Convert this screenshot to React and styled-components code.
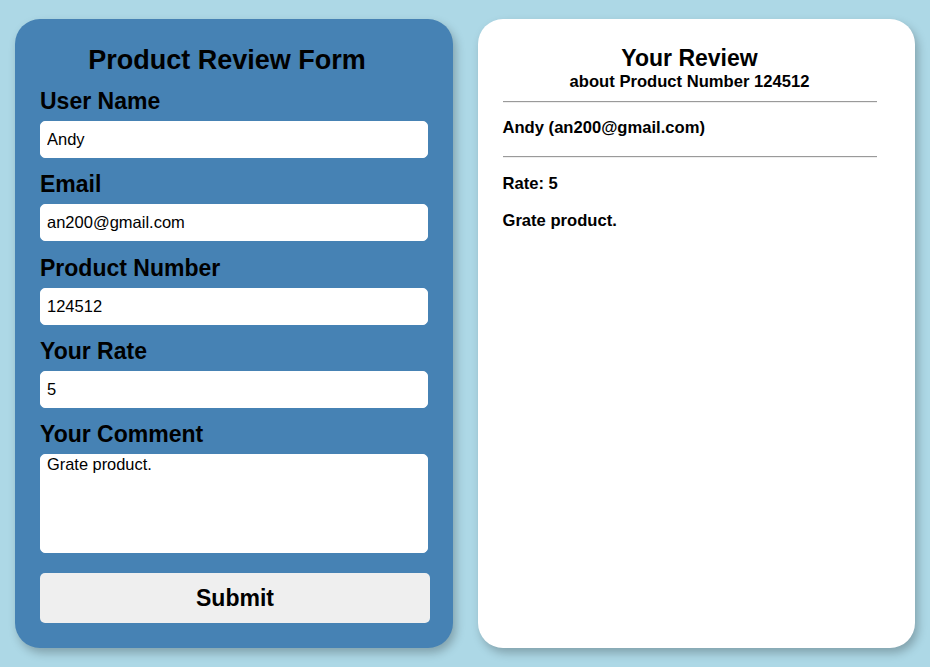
import React, { useState } from "react";
import styled, { createGlobalStyle } from "styled-components";

const GlobalStyle = createGlobalStyle`
  html, body {
    margin: 0;
    padding: 0;
    background-color: #add8e6;
    font-family: "Liberation Sans", Arial, sans-serif;
    color: #000;
  }
`;

const Page = styled.main`
  display: flex;
  align-items: stretch;
  gap: 25px;
  padding: 19px 15px;
  min-height: 667px;
  box-sizing: border-box;
`;

const Card = styled.section`
  flex: 1;
  min-width: 0;
  align-self: flex-start;
  height: 629px;
  box-sizing: border-box;
  padding: 26px 38.5px 25px 25px;
  border-radius: 25px;
  background-color: ${(p) => (p.$dark ? "#4682b4" : "#fff")};
  box-shadow: 3px 5px 10px rgba(0, 0, 0, 0.25);
`;

const FormTitle = styled.h1`
  margin: 0 0 12px;
  font-size: 27px;
  line-height: 31px;
  font-weight: bold;
  text-align: center;
`;

const Form = styled.form`
  display: flex;
  flex-direction: column;
`;

const Field = styled.div`
  display: flex;
  flex-direction: column;
  gap: 7px;
  margin-bottom: 13.3px;
`;

const Label = styled.label`
  font-size: 23px;
  line-height: 26px;
  font-weight: bold;
`;

const Input = styled.input`
  box-sizing: content-box;
  width: 100%;
  height: 23px;
  padding: 6px;
  border: 1px solid #fff;
  border-radius: 5px;
  background: #fff;
  font-family: inherit;
  font-size: 16.5px;
  color: #000;
  outline: none;
`;

const TextArea = styled.textarea`
  box-sizing: content-box;
  width: 100%;
  height: 97px;
  padding: 0 6px;
  border: 1px solid #fff;
  border-radius: 5px;
  background: #fff;
  font-family: inherit;
  font-size: 16.4px;
  color: #000;
  resize: none;
  outline: none;
`;

const SubmitButton = styled.button`
  box-sizing: content-box;
  width: 100%;
  height: 50px;
  padding: 0 8px;
  margin-top: 7px;
  border: none;
  border-radius: 5px;
  background: #efefef;
  font-family: inherit;
  font-size: 23px;
  font-weight: bold;
  color: #000;
  cursor: pointer;
`;

const ReviewTitle = styled.h2`
  margin: 0;
  font-size: 23px;
  line-height: 26px;
  text-align: center;
`;

const ReviewSub = styled.h3`
  margin: 1px 0 0;
  font-size: 16.6px;
  line-height: 19px;
  text-align: center;
`;

const Divider = styled.hr`
  margin: ${(p) => p.$top}px 0 0;
  border: none;
  border-top: 1px solid #9a9a9a;
  border-bottom: 1px solid #eee;
`;

const Line = styled.p`
  margin: ${(p) => p.$top}px 0 0;
  font-size: 16.6px;
  line-height: 19px;
  font-weight: bold;
`;

export default function App() {
  const [review, setReview] = useState({
    name: "Andy",
    email: "an200@gmail.com",
    product: "124512",
    rate: "5",
    comment: "Grate product.",
  });

  const update = (key) => (e) => setReview({ ...review, [key]: e.target.value });

  return (
    <>
      <GlobalStyle />
      <Page>
        <Card $dark>
          <FormTitle>Product Review Form</FormTitle>
          <Form onSubmit={(e) => e.preventDefault()}>
            <Field>
              <Label htmlFor="name">User Name</Label>
              <Input id="name" value={review.name} onChange={update("name")} />
            </Field>
            <Field>
              <Label htmlFor="email">Email</Label>
              <Input id="email" value={review.email} onChange={update("email")} />
            </Field>
            <Field>
              <Label htmlFor="product">Product Number</Label>
              <Input id="product" value={review.product} onChange={update("product")} />
            </Field>
            <Field>
              <Label htmlFor="rate">Your Rate</Label>
              <Input id="rate" value={review.rate} onChange={update("rate")} />
            </Field>
            <Field>
              <Label htmlFor="comment">Your Comment</Label>
              <TextArea id="comment" value={review.comment} onChange={update("comment")} />
            </Field>
            <SubmitButton type="submit">Submit</SubmitButton>
          </Form>
        </Card>
        <Card>
          <ReviewTitle>Your Review</ReviewTitle>
          <ReviewSub>about Product Number {review.product}</ReviewSub>
          <Divider $top={10} />
          <Line $top={15}>
            {review.name} ({review.email})
          </Line>
          <Divider $top={19} />
          <Line $top={16}>Rate: {review.rate}</Line>
          <Line $top={18}>{review.comment}</Line>
        </Card>
      </Page>
    </>
  );
}
